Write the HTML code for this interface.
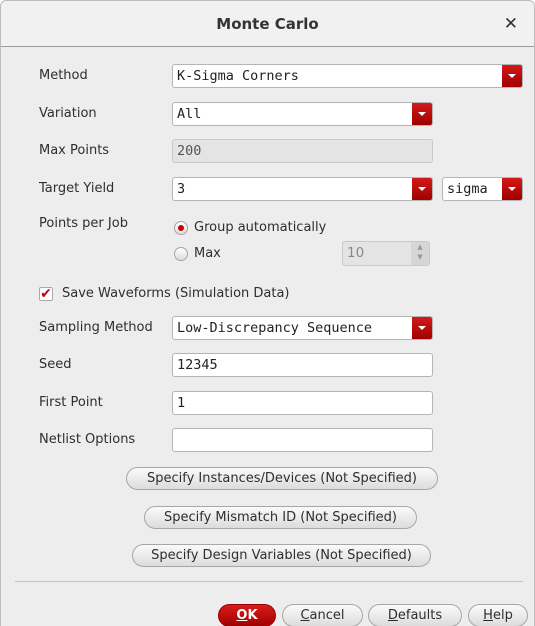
<!DOCTYPE html><html><head><style>
*{box-sizing:border-box;margin:0;padding:0}
html,body{width:535px;height:626px;overflow:hidden}
body{background:#fff;font-family:"DejaVu Sans","Liberation Sans",sans-serif;font-size:13px;color:#2e2e2e;position:relative}
.win{position:absolute;left:0;top:0;width:535px;height:626px;background:#ededed;border:1px solid #bdbdbd;border-bottom:none;border-radius:6px 6px 0 0;overflow:hidden}
.title{position:absolute;left:0;top:0;width:533px;height:46px;background:#f1f1f1;border-bottom:1px solid #9d9d9d;border-radius:6px 6px 0 0;text-align:center;line-height:46px;font-weight:bold;font-size:15px;color:#333}
.x{position:absolute;right:16px;top:0;font-size:17px;font-weight:bold}
.a{position:absolute}
.lbl{position:absolute;left:38px}
.f{position:absolute;height:24px;background:#fff;border:1px solid #b5b5b5;border-radius:3px;font-family:"DejaVu Sans Mono","Liberation Mono",monospace;font-size:13.5px;line-height:22px;padding-left:4px;color:#222}
.f.g{background:#e4e4e4;color:#555;border-color:#c9c9c9}
.dd{position:absolute;right:0;top:0;width:20px;height:22px;background:linear-gradient(#d41a1a,#9e0000);border-radius:0 2px 2px 0}
.dd:after{content:"";position:absolute;left:6px;top:9px;border-left:4px solid transparent;border-right:4px solid transparent;border-top:4px solid #fff}
.b{position:absolute;height:23px;border:1px solid #a7a7a7;border-radius:12px;background:linear-gradient(#fafafa,#dcdcdc);text-align:center;line-height:21px;font-size:13px;color:#2e2e2e}
.r{position:absolute;width:14px;height:14px;border-radius:50%;border:1px solid #a5a5a5;background:linear-gradient(#fff,#ddd)}
</style></head><body><div class="win">
<div class="title">Monte Carlo<span class="x">✕</span></div>
<div class="lbl" style="top:67px">Method</div>
<div class="f" style="left:171px;top:63px;width:351px">K-Sigma Corners<div class="dd"></div></div>
<div class="lbl" style="top:105px">Variation</div>
<div class="f" style="left:171px;top:101px;width:261px">All<div class="dd"></div></div>
<div class="lbl" style="top:142px">Max Points</div>
<div class="f g" style="left:171px;top:138px;width:261px">200</div>
<div class="lbl" style="top:180px">Target Yield</div>
<div class="f" style="left:171px;top:176px;width:261px">3<div class="dd"></div></div>
<div class="f" style="left:441px;top:176px;width:81px">sigma<div class="dd"></div></div>
<div class="lbl" style="top:215px">Points per Job</div>
<div class="r" style="left:173px;top:220px"><div style="position:absolute;left:3px;top:3px;width:6px;height:6px;border-radius:50%;background:#c00"></div></div>
<div class="a" style="left:193px;top:219px">Group automatically</div>
<div class="r" style="left:173px;top:246px"></div>
<div class="a" style="left:193px;top:245px">Max</div>
<div class="f g" style="left:341px;top:240px;width:88px;height:25px;font-family:'DejaVu Sans',sans-serif;color:#888">10<div style="position:absolute;right:0;top:0;width:18px;height:23px;background:#d6d6d6;font-size:7px;line-height:10px;text-align:center;color:#999">▲<br>▼</div></div>
<div class="a" style="left:38px;top:286px;width:14px;height:14px;border:1px solid #aaa;background:#fff;border-radius:2px;color:#c00;font-size:14px;line-height:12px;text-align:center;font-weight:900">✔</div>
<div class="a" style="left:61px;top:285px">Save Waveforms (Simulation Data)</div>
<div class="lbl" style="top:319px">Sampling Method</div>
<div class="f" style="left:171px;top:315px;width:261px">Low-Discrepancy Sequence<div class="dd"></div></div>
<div class="lbl" style="top:356px">Seed</div>
<div class="f" style="left:171px;top:352px;width:261px">12345</div>
<div class="lbl" style="top:394px">First Point</div>
<div class="f" style="left:171px;top:390px;width:261px">1</div>
<div class="lbl" style="top:431px">Netlist Options</div>
<div class="f" style="left:171px;top:427px;width:261px"></div>
<div class="b" style="left:125px;top:466px;width:312px">Specify Instances/Devices (Not Specified)</div>
<div class="b" style="left:143px;top:505px;width:273px">Specify Mismatch ID (Not Specified)</div>
<div class="b" style="left:131px;top:543px;width:299px">Specify Design Variables (Not Specified)</div>
<div class="a" style="left:14px;top:580px;width:508px;height:1px;background:#c4c4c4"></div>
<div class="b" style="left:217px;top:603px;width:58px;background:linear-gradient(#d81c1c,#a00000);border-color:#900;color:#fff;font-weight:bold"><u>O</u>K</div>
<div class="b" style="left:281px;top:603px;width:81px"><u>C</u>ancel</div>
<div class="b" style="left:367px;top:603px;width:94px"><u>D</u>efaults</div>
<div class="b" style="left:467px;top:603px;width:60px"><u>H</u>elp</div>
</div></body></html>
